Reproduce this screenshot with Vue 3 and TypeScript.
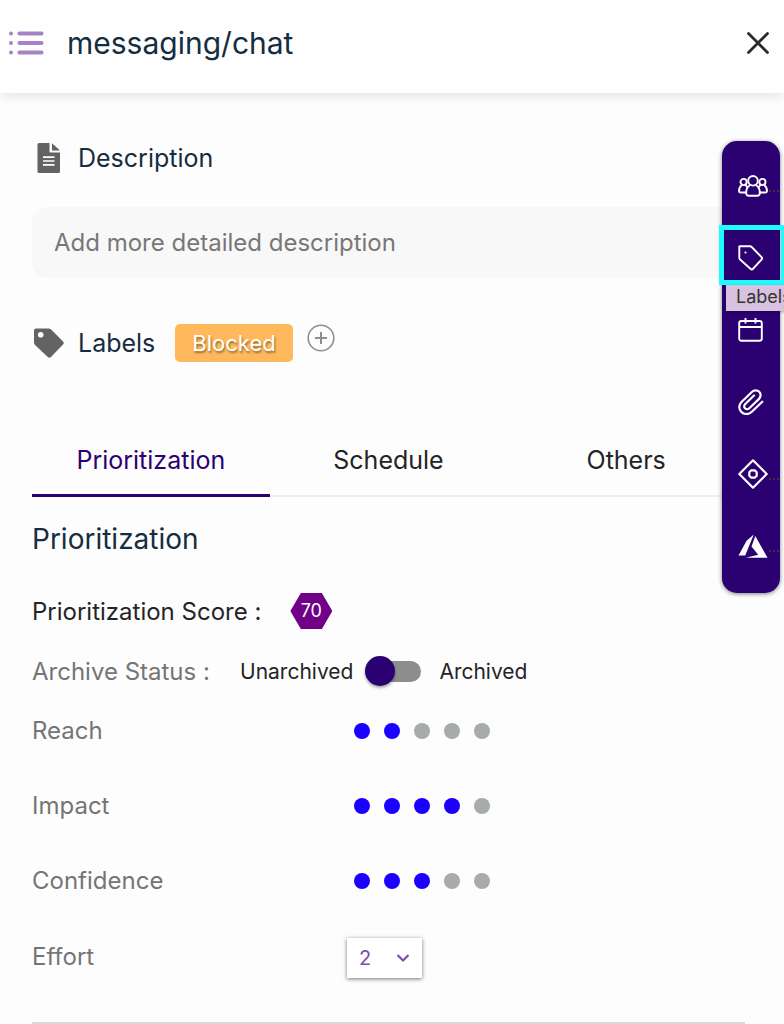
<script setup lang="ts">
import { ref } from 'vue'

interface Rating {
  name: string
  value: number
}

const tabs: string[] = ['Prioritization', 'Schedule', 'Others']
const activeTab = ref('Prioritization')
const archived = ref(false)
const effort = ref('2')
const description = ref('')
const ratings = ref<Rating[]>([
  { name: 'Reach', value: 2 },
  { name: 'Impact', value: 4 },
  { name: 'Confidence', value: 3 },
])
</script>

<template>
  <div class="page">
    <header class="topbar">
      <svg class="list-icon" viewBox="0 0 36 24" aria-hidden="true">
        <g fill="#a583c6">
          <circle cx="3" cy="2.4" r="2" /><circle cx="3" cy="12" r="2" /><circle cx="3" cy="21.4" r="2" />
          <rect x="9.500" y="0.4" width="26" height="4" rx="2" />
          <rect x="9.500" y="10" width="26" height="4" rx="2" />
          <rect x="9.500" y="19.4" width="26" height="4" rx="2" />
        </g>
      </svg>
      <h1>messaging/chat</h1>
      <button class="close" type="button" aria-label="Close">
        <svg viewBox="0 0 22 22"><path d="M1.5 1.5 20.5 20.5M20.5 1.5 1.5 20.5" stroke="#2b2b2b" stroke-width="2.8" stroke-linecap="round" /></svg>
      </button>
    </header>

    <main class="content">
      <section class="heading">
        <svg class="doc-icon" viewBox="0 0 30 30" aria-hidden="true">
          <path fill="#636363" d="M4.500 0H15.500V8.500Q15.500 9.500 16.500 9.500H26V28.500Q26 30 24.500 30H5Q3.500 30 3.500 28.500V1.500Q3.500 0 5 0Z" />
          <path fill="#636363" d="M18 0.300 26 7.500H18Z" />
          <path stroke="#fff" stroke-width="1.700" d="M9 14.200H20.500M9 18H20.500M9 21.800H20.500" />
        </svg>
        <label for="description">Description</label>
      </section>
      <input id="description" v-model="description" class="description" type="text" placeholder="Add more detailed description">

      <section class="heading labels">
        <svg class="tag-icon" viewBox="0 0 30 30" aria-hidden="true">
          <path fill="#636363" fill-rule="evenodd" d="M2 0.500H14.500Q16 0.500 17.200 1.500L29 13.500Q30.500 15 29 16.600L17 28.900Q15.400 30.400 13.800 29L1.300 17.300Q0 16.200 0 14.500V2.500Q0 0.500 2 0.500ZM6.700 4A2.800 2.800 0 1 0 6.700 9.600A2.800 2.800 0 1 0 6.700 4Z" />
        </svg>
        <h2>Labels</h2>
        <span class="chip">Blocked</span>
        <button class="add" type="button" aria-label="Add label">
          <svg viewBox="0 0 28 28" fill="none" stroke="#8f8f8f" stroke-width="1.600"><circle cx="14" cy="14" r="12.800" /><path d="M14 8V20M8 14H20" stroke-width="2" /></svg>
        </button>
      </section>

      <div class="tabs" role="tablist">
        <button
          v-for="tab in tabs"
          :key="tab"
          type="button"
          role="tab"
          class="tab"
          :class="{ active: tab === activeTab }"
          :aria-selected="tab === activeTab"
          @click="activeTab = tab"
        >{{ tab }}</button>
      </div>

      <h2 class="section-title">Prioritization</h2>

      <div class="score">
        <span>Prioritization Score :</span>
        <span class="hex">70</span>
      </div>

      <div class="archive">
        <span class="caption">Archive Status :</span>
        <span>Unarchived</span>
        <input v-model="archived" class="switch" type="checkbox" aria-label="Archived">
        <span>Archived</span>
      </div>

      <div v-for="rating in ratings" :key="rating.name" class="row" role="radiogroup" :aria-label="rating.name">
        <span class="caption">{{ rating.name }}</span>
        <div class="dots">
          <input
            v-for="n in 5"
            :key="n"
            v-model="rating.value"
            type="radio"
            class="dot"
            :class="{ filled: n <= rating.value }"
            :name="rating.name"
            :value="n"
            :aria-label="`${rating.name} ${n}`"
          >
        </div>
      </div>

      <div class="row effort-row">
        <label class="caption" for="effort">Effort</label>
        <div class="select-box">
          <select id="effort" v-model="effort">
            <option v-for="n in 5" :key="n" :value="String(n)">{{ n }}</option>
          </select>
          <svg viewBox="0 0 14 10" aria-hidden="true"><path d="M1.500 2 7 7.500 12.500 2" fill="none" stroke="#7b4fae" stroke-width="2.200" /></svg>
        </div>
      </div>
    </main>

    <nav class="rail" aria-label="Card actions">
      <button type="button" aria-label="Members">
        <svg class="wide" viewBox="0 0 30 24" fill="none" stroke="#fff" stroke-width="1.900" stroke-linejoin="round">
          <circle cx="15" cy="6.800" r="4.800" />
          <path d="M11.800 11.200C9.200 13 8 16 8.200 19.300Q8.300 21.800 11 21.800H19Q21.700 21.800 21.800 19.300C22 16 20.800 13 18.200 11.200" />
          <circle cx="5.600" cy="8" r="3.100" /><circle cx="24.400" cy="8" r="3.100" />
          <path d="M3.800 11C1.600 12.600 1 14.800 1 17.300Q1 18.500 2.500 18.500H8M26.200 11C28.400 12.600 29 14.800 29 17.300Q29 18.500 27.500 18.500H22M7.500 11 9.500 13.400M22.500 11 20.500 13.400" />
        </svg>
        <span class="more">...</span>
      </button>
      <button type="button" class="selected" aria-label="Labels">
        <svg viewBox="0 0 26 26" fill="none" stroke="#fff" stroke-width="1.900" stroke-linejoin="round">
          <path d="M1.500 1.300H12Q13 1.300 13.700 2L23.700 12.300Q24.700 13.300 23.700 14.300L14.800 24Q13.700 25 12.700 24L2.100 14.500Q1.300 13.800 1.300 12.800V1.500Z" /><circle cx="7.500" cy="7.500" r="1.100" fill="#fff" stroke="none" />
        </svg>
        <span class="tooltip">Labels</span>
      </button>
      <button type="button" aria-label="Dates">
        <svg viewBox="0 0 26 26" fill="none" stroke="#fff" stroke-width="1.900">
          <rect x="1.200" y="4" width="22.600" height="19.800" rx="2.200" /><path d="M1.200 10H23.800M7.500 1V6.500M17.500 1V6.500" />
        </svg>
      </button>
      <button type="button" aria-label="Attachments">
        <svg viewBox="0 0 26 26" fill="none" stroke="#fff" stroke-width="2.200" stroke-linecap="round">
          <path d="M24.300 12.700 13.800 22.800C10.500 26 5.900 25.600 3.200 22.700C0.500 19.900 0.700 15.800 3.500 13L13.800 3C16.100 0.800 19.300 0.800 21.200 2.800C23.200 4.800 23 8 20.800 10.100L11.300 19.200C10 20.500 8.200 20.600 7 19.300C5.800 18.100 6 16.300 7.300 15L16 6.500" />
        </svg>
      </button>
      <button type="button" aria-label="Milestones">
        <svg class="wide diamond" viewBox="0 0 30 30" fill="none" stroke="#fff" stroke-width="2.200" stroke-linejoin="round">
          <path d="M15 1.300 28.700 15 15 28.700 1.300 15Z" /><path d="M13.300 11.300H16.700L18.700 13.300V16.700L16.700 18.700H13.300L11.300 16.700V13.300Z" />
        </svg>
        <span class="more">...</span>
      </button>
      <button type="button" aria-label="Azure">
        <svg class="wide" viewBox="0 0 30 24" fill="#fff">
          <path d="M15.800 0.500 8.600 6.700 0.500 21.500H7.200Z" /><path d="M17.300 2 13.500 12.500 20.200 20.700 8 23.700H29.500Z" />
        </svg>
        <span class="more">...</span>
      </button>
    </nav>
  </div>
</template>

<style>
body {
  margin: 0;
  background: #fdfdfd;
}
</style>

<style scoped>
* {
  box-sizing: border-box;
}

.page {
  position: relative;
  overflow: hidden;
  font-family: Inter, "Noto Sans", sans-serif;
  color: #242426;
}

button,
input,
select {
  font: inherit;
  margin: 0;
}

button {
  border: 0;
  background: none;
  padding: 0;
  cursor: pointer;
}

svg {
  display: block;
  flex: none;
}

h1,
h2 {
  margin: 0;
  font-size: inherit;
  font-weight: 400;
}

.topbar {
  display: flex;
  align-items: center;
  height: 93px;
  padding: 0 15px 8px 8px;
  background: #fefefe;
  box-shadow: 0 2px 12px rgba(0, 0, 0, 0.12);
}

.list-icon {
  width: 36px;
  height: 24px;
}

.topbar h1 {
  margin-left: 23px;
  color: #152d40;
  font-size: 30px;
  line-height: 40px;
}

.close {
  margin-left: auto;
}

.close svg {
  width: 22px;
  height: 22px;
}

.content {
  padding: 45px 39px 0 32px;
}

.heading {
  display: flex;
  align-items: center;
  height: 40px;
  color: #152d40;
  font-size: 25px;
}

.doc-icon,
.tag-icon {
  width: 30px;
  height: 30px;
  margin: 0 14px 0 2px;
}

.description {
  display: block;
  width: 100%;
  height: 71px;
  margin-top: 29px;
  padding: 0 22px;
  border: 0;
  border-radius: 16px;
  outline: 0;
  background: #f8f8f8;
  font-size: 24px;
}

.description::placeholder {
  color: #777;
  opacity: 1;
}

.labels {
  margin-top: 45px;
}

.chip {
  height: 38px;
  margin: 0 14px 0 20px;
  padding: 0 17px;
  border-radius: 5px;
  background: #ffb85c;
  color: #fff;
  font-size: 22px;
  line-height: 38px;
  text-shadow: 1px 2px 2px rgba(80, 60, 20, 0.6);
}

.add {
  margin-bottom: 10px;
}

.add svg {
  width: 28px;
  height: 28px;
}

.tabs {
  display: grid;
  grid-template-columns: repeat(3, 1fr);
  margin-top: 60px;
  border-bottom: 2px solid #efefef;
}

.tab {
  height: 74px;
  margin-bottom: -2px;
  padding-top: 2px;
  border-bottom: 3px solid transparent;
  color: #242426;
  font-size: 25px;
}

.tab.active {
  border-color: #2b0071;
  color: #2b0071;
}

.section-title {
  margin-top: 22px;
  color: #152d40;
  font-size: 28px;
  line-height: 40px;
}

.score,
.archive {
  display: flex;
  align-items: center;
  height: 60px;
}

.score {
  margin-top: 22px;
  font-size: 24px;
}

.hex {
  width: 42px;
  height: 36px;
  margin-left: 29px;
  background: #700088;
  clip-path: polygon(25% 0, 75% 0, 100% 50%, 75% 100%, 25% 100%, 0 50%);
  color: #fff;
  font-size: 18px;
  line-height: 36px;
  text-align: center;
}

.archive {
  font-size: 21px;
}

.caption {
  flex: none;
  color: #757575;
  font-size: 24px;
}

.archive .caption {
  width: 208px;
}

.switch {
  position: relative;
  appearance: none;
  width: 56px;
  height: 30px;
  margin: 0 18px 0 12px;
  cursor: pointer;
}

.switch::before {
  content: "";
  position: absolute;
  inset: 5px 0 4px 4px;
  border-radius: 11px;
  background: #8d8d8d;
}

.switch::after {
  content: "";
  position: absolute;
  top: 0;
  left: 0;
  width: 30px;
  height: 30px;
  border-radius: 50%;
  background: #2b0071;
  box-shadow: 0 2px 3px rgba(0, 0, 0, 0.35);
}

.switch:checked::after {
  left: 26px;
}

.row {
  display: grid;
  grid-template-columns: 315px 1fr;
  align-items: center;
  height: 75px;
}

.archive + .row {
  margin-top: -8px;
}

.dots {
  display: flex;
  gap: 14px;
  padding-left: 7px;
}

.dot {
  appearance: none;
  width: 16px;
  height: 16px;
  border-radius: 50%;
  background: #a7abac;
  cursor: pointer;
}

.dot.filled {
  background: #1c00ff;
}

.effort-row {
  height: 106px;
  padding-bottom: 28px;
  border-bottom: 2px solid #d9d9d9;
}

.select-box {
  display: flex;
  align-items: center;
  position: relative;
  width: 75px;
  height: 40px;
  margin-top: 4px;
  background: #fff;
  box-shadow: 0 1px 4px rgba(0, 0, 0, 0.55);
}

.select-box select {
  appearance: none;
  width: 100%;
  height: 100%;
  padding: 0 12px;
  border: 0;
  background: transparent;
  color: #7b4fae;
  font-size: 20px;
}

.select-box svg {
  position: absolute;
  right: 12px;
  width: 14px;
  height: 10px;
  pointer-events: none;
}

.rail {
  position: absolute;
  top: 141px;
  right: 4px;
  width: 58px;
  padding: 9px 0 11px;
  border-radius: 15px;
  background: #2b0071;
  box-shadow: 0 1px 4px rgba(0, 0, 0, 0.5);
}

.rail button {
  display: flex;
  align-items: center;
  position: relative;
  width: 100%;
  height: 72px;
  padding-left: 16px;
}

.rail svg {
  width: 26px;
  height: 26px;
}

.rail svg.wide {
  width: 30px;
  height: 24px;
}

.rail svg.diamond {
  height: 30px;
}

.more {
  position: absolute;
  top: 30px;
  right: 0;
  color: #3c3c3c;
  font-size: 12px;
  font-weight: 700;
  line-height: 16px;
}

.selected::before {
  content: "";
  position: absolute;
  inset: 3px -6px 9px -3px;
  border: 5px solid #1ffcff;
}

.tooltip {
  position: absolute;
  top: 63px;
  left: 4px;
  z-index: 1;
  height: 26px;
  padding: 0 10px;
  background: #d8c2df;
  box-shadow: 0 1px 3px rgba(0, 0, 0, 0.3);
  color: #343434;
  font-size: 18px;
  line-height: 24px;
}
</style>
